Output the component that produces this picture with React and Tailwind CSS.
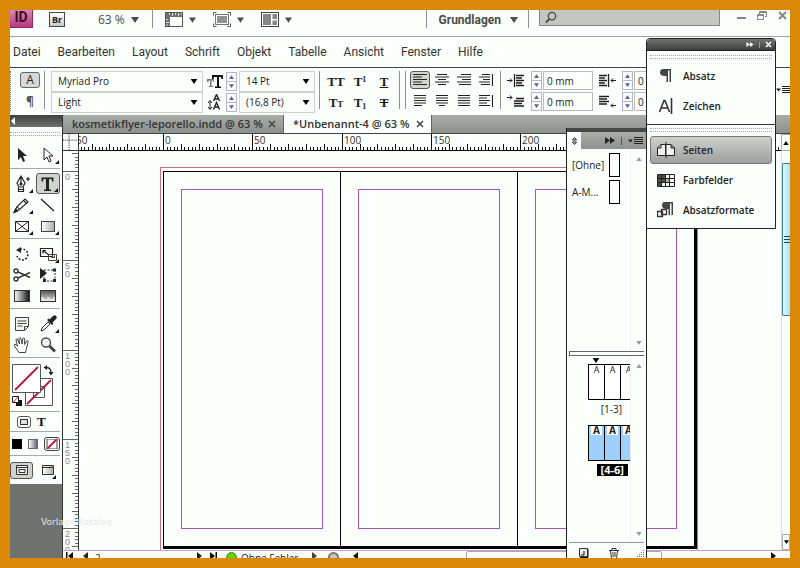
const MENUS = ["Datei", "Bearbeiten", "Layout", "Schrift", "Objekt", "Tabelle", "Ansicht", "Fenster", "Hilfe"];

// Screen pixels per ruler unit at 63 % zoom
const UNIT = 1.787;

/* ── Small shared shapes ── */
function Caret({ className = "w-2 h-[6px]" }) {
  return (
    <svg viewBox="0 0 8 6" className={`shrink-0 fill-current ${className}`} aria-hidden="true">
      <path d="M0 0h8L4 6z" />
    </svg>
  );
}

function Divider() {
  return <div className="w-px self-stretch bg-[#8f938f] shrink-0" />;
}

function Grip() {
  return <div className="h-[4px] shrink-0 border-y border-dotted border-[#a4a8a4]" />;
}

function DoubleArrow() {
  return (
    <svg width="10" height="7" viewBox="0 0 10 7" className="fill-current" aria-hidden="true">
      <path d="M0 0l5 3.5L0 7zM5 0l5 3.5L5 7z" />
    </svg>
  );
}

function MenuLines() {
  return (
    <svg width="15" height="8" viewBox="0 0 15 8" className="shrink-0" aria-hidden="true">
      <path d="M0 2.500h5L2.500 5.500z" fill="#222" />
      <path d="M6 .5h9M6 2.500h9M6 4.500h9M6 6.500h9" stroke="#222" />
    </svg>
  );
}

/* ── Application bar ── */
function AppBar() {
  return (
    <header className="flex items-start h-[27px] shrink-0 border-b border-[#9da19d] text-[#4a4d4a]">
      <div className="w-[23px] h-[18px] bg-linear-to-b from-[#d58ab4] to-[#b8357c] border-r border-b border-[#8f2b62] text-[#3a0a26] text-[14px] leading-[14px] font-bold text-center font-['Roboto',sans-serif]">
        ID
      </div>
      <button className="ml-4 mt-[2px] w-[16px] h-[15px] border border-[#444] bg-linear-to-b from-white to-[#c9cdc9] text-[9px] leading-[13px] font-bold text-[#222]">
        Br
      </button>
      <button className="ml-[33px] flex items-center gap-[6px] h-5 text-[12px]">
        63 % <Caret />
      </button>
      <div className="flex ml-[13px] h-[18px]">
        <Divider />
      </div>
      <button className="ml-3 flex items-center gap-[6px] h-[19px]" aria-label="Anzeigeoptionen">
        <svg width="18" height="15" viewBox="0 0 18 15">
          <rect x=".5" y=".5" width="17" height="14" fill="#fff" stroke="#555" />
          <path d="M1 1h16v4H5v9H1z" fill="#6d706d" />
          <path d="M4.5 1v2M7.500 1v3M10.500 1v2M13.500 1v3M16 1v2M1 7.500h2M1 10.500h3M1 13h2" stroke="#ddd" />
        </svg>
        <Caret className="w-[7px] h-[6px]" />
      </button>
      <button className="ml-[17px] flex items-center gap-[6px] h-[19px]" aria-label="Bildschirmmodus">
        <svg width="18" height="15" viewBox="0 0 18 15" fill="none" stroke="#555">
          <path d="M.5 3.500v-3h3M14.500.5h3v3M17.500 11.500v3h-3M3.500 14.500h-3v-3" />
          <rect x="2.500" y="2.500" width="13" height="10" stroke="#777" />
          <rect x="4" y="4" width="10" height="7" fill="#909390" stroke="none" />
        </svg>
        <Caret className="w-[7px] h-[6px]" />
      </button>
      <button className="ml-[17px] flex items-center gap-[6px] h-[19px]" aria-label="Dokumente anordnen">
        <svg width="18" height="15" viewBox="0 0 18 15">
          <rect x=".5" y=".5" width="17" height="14" fill="#fff" stroke="#444" />
          <path d="M2 2h8v11H2zM11.500 2H16v5h-4.500zM11.500 8.500H16V13h-4.500z" fill="#858985" />
        </svg>
        <Caret className="w-[7px] h-[6px]" />
      </button>
      <div className="ml-auto flex items-start">
        <div className="flex h-[18px]">
          <Divider />
        </div>
        <button className="ml-3 flex items-center gap-[9px] h-5 text-[12px] font-bold font-['Roboto',sans-serif]">
          Grundlagen <Caret />
        </button>
        <div className="flex ml-[10px] h-[18px]">
          <Divider />
        </div>
        <label className="ml-[10px] flex items-center w-[181px] h-4 pl-[5px] bg-[#c3c6c3] border border-t-0 border-[#858985]">
          <svg width="13" height="13" viewBox="0 0 13 13" fill="none" stroke="#444" aria-hidden="true">
            <circle cx="7.500" cy="5" r="4" strokeWidth="1.300" />
            <path d="M4.800 8 1 12" strokeWidth="2" />
          </svg>
          <input aria-label="Suchen" className="w-full min-w-0 bg-transparent outline-none text-[11px]" />
        </label>
        <div className="flex items-start gap-[11px] ml-[17px] pr-[3px] text-[#858885]">
          <button aria-label="Minimieren">
            <svg width="9" height="11" viewBox="0 0 9 11">
              <path d="M0 8h9" stroke="currentColor" strokeWidth="2" />
            </svg>
          </button>
          <button aria-label="Wiederherstellen">
            <svg width="10" height="11" viewBox="0 0 10 11" fill="none" stroke="currentColor">
              <path d="M2.500 4V1.500h7v5H8M2.500 2.500h7M.5 4.500h6v5h-6zM.5 5.500h6" />
            </svg>
          </button>
          <button aria-label="Schließen">
            <svg width="9" height="11" viewBox="0 0 9 11">
              <path d="M1 2l7 7M8 2 1 9" stroke="currentColor" strokeWidth="2" />
            </svg>
          </button>
        </div>
      </div>
    </header>
  );
}

/* ── Control bar ── */
function Dropdown({ label, value, className }) {
  return (
    <label className={`relative flex items-center h-[21px] border border-[#cdd1cd] ${className}`}>
      <select
        aria-label={label}
        className="appearance-none w-full h-full pl-[6px] bg-transparent text-[10px] text-[#222] outline-none"
      >
        <option>{value}</option>
      </select>
      <Caret className="absolute right-[4px] w-2 h-[5px] text-black pointer-events-none" />
    </label>
  );
}

function Stepper({ label }) {
  return (
    <div className="flex flex-col w-[11px] h-[19px] shrink-0 border border-[#b3b6cc]">
      <button className="flex-1 flex items-center justify-center border-b border-[#b3b6cc]" aria-label={`${label} erhöhen`}>
        <Caret className="w-[5px] h-[4px] rotate-180 text-[#5c6394]" />
      </button>
      <button className="flex-1 flex items-center justify-center" aria-label={`${label} verringern`}>
        <Caret className="w-[5px] h-[4px] text-[#5c6394]" />
      </button>
    </div>
  );
}

function Measure({ label }) {
  return (
    <div className="flex items-center gap-px">
      <Stepper label={label} />
      <input
        aria-label={label}
        defaultValue="0 mm"
        className="w-[50px] h-[19px] px-[3px] border border-[#b9bdb9] bg-transparent text-[10px] text-[#222] outline-none"
      />
    </div>
  );
}

const ALIGNMENTS = [
  { name: "Linksbündig", d: "M0 .5h14M0 3h9M0 5.500h14M0 8h9M0 10.500h14", active: true },
  { name: "Zentriert", d: "M2 .5h10M0 3h14M3 5.500h8M0 8h14M3 10.500h8" },
  { name: "Rechtsbündig", d: "M4 .5h10M0 3h14M5 5.500h9M0 8h14M2 10.500h12" },
  { name: "Am Rücken", d: "M3 .5h8M0 3h11M4 5.500h7M0 8h11M2 10.500h9M13.500 0v12" },
  { name: "Blocksatz links", d: "M1 .5h12M1 3h12M1 5.500h12M1 8h12M1 10.500h8" },
  { name: "Blocksatz zentriert", d: "M1 .5h12M1 3h12M1 5.500h12M1 8h12M4 10.500h6" },
  { name: "Blocksatz", d: "M1 .5h12M1 3h12M1 5.500h12M1 8h12M1 10.500h12" },
  { name: "Vom Rücken weg", d: "M0 .5h11M0 3h8M0 5.500h11M0 8h8M0 10.500h11M13.500 0v12" },
];

function IndentIcon({ d, arrow }) {
  return (
    <svg width="17" height="13" viewBox="0 0 17 13" fill="none" stroke="#1c1c1c" className="shrink-0" aria-hidden="true">
      <path d={d} strokeWidth="1.300" />
      <path d={arrow} />
    </svg>
  );
}

function ControlBar() {
  const glyph = "w-5 h-[21px] font-['Liberation_Serif',serif] font-bold text-[13px] leading-[21px] text-[#1c1c1c]";
  return (
    <div className="flex items-start h-[47px] shrink-0 pt-[3px] text-[#222] overflow-hidden">
      <div className="w-[2px] h-10 border-l border-dotted border-[#777]" />
      <div className="flex flex-col items-center ml-2 w-5 gap-[7px] pt-px">
        <button className="w-5 h-4 rounded-[3px] border border-[#666] bg-[#d5d8d5] text-[12px] leading-[14px]">A</button>
        <button className="text-[12px] leading-[14px] font-bold text-[#555]">¶</button>
      </div>
      <div className="flex h-[38px] ml-1">
        <Divider />
      </div>

      <div className="flex flex-col ml-[6px]">
        <Dropdown label="Schriftart" value="Myriad Pro" className="w-[152px]" />
        <Dropdown label="Schriftschnitt" value="Light" className="w-[152px]" />
      </div>

      <div className="flex flex-col ml-1 gap-px">
        <div className="flex items-center gap-[3px] h-5">
          <svg width="16" height="16" viewBox="0 0 16 16" aria-hidden="true">
            <path d="M0 6h7v3H6V7.500H4.500V13H6v1H2v-1h1V7.500H1.500V9H0z" fill="#777" />
            <path d="M5 2h11v4h-1.500L14 4h-2v9.500h2V15H8v-1.500h2V4H7l-.5 2H5z" fill="#111" />
          </svg>
          <Stepper label="Schriftgrad" />
        </div>
        <div className="flex items-center gap-[3px] h-5">
          <svg width="16" height="16" viewBox="0 0 16 16" fill="none" stroke="#222" aria-hidden="true">
            <path d="M6.500 7 9.500.5 12.500 7M7.500 5h4M6.500 15.500l3-7 3 7M7.500 13h4" strokeWidth="1.400" />
            <path d="M3 7v8M1 9l2-2.500L5 9M1 13l2 2.500L5 13" />
          </svg>
          <Stepper label="Zeilenabstand" />
        </div>
      </div>
      <div className="flex flex-col ml-[2px]">
        <Dropdown label="Schriftgrad" value="14 Pt" className="w-[76px]" />
        <Dropdown label="Zeilenabstand" value="(16,8 Pt)" className="w-[76px]" />
      </div>
      <div className="flex h-[38px] ml-1 mr-1">
        <Divider />
      </div>

      <div className="grid grid-cols-[24px_24px_24px] justify-items-center">
        <button className={glyph}>TT</button>
        <button className={glyph}>T<sup className="text-[8px]">1</sup></button>
        <button className={`${glyph} underline`}>T</button>
        <button className={glyph}>T<span className="text-[9px]">T</span></button>
        <button className={glyph}>T<sub className="text-[8px]">1</sub></button>
        <button className={`${glyph} line-through`}>T</button>
      </div>
      <div className="flex h-[38px] ml-[3px] gap-[5px]">
        <Divider />
        <Divider />
      </div>

      <div className="grid grid-cols-4 gap-x-[2px] gap-y-[3px] ml-1">
        {ALIGNMENTS.map((a) => (
          <button
            key={a.name}
            aria-label={a.name}
            className={`w-5 h-[18px] flex items-center justify-center rounded-[3px] ${
              a.active ? "border border-[#555] bg-[#d3d6d3]" : ""
            }`}
          >
            <svg width="14" height="12" viewBox="0 0 14 12" className="shrink-0">
              <path d={a.d} stroke="#222" strokeWidth="1.200" />
            </svg>
          </button>
        ))}
      </div>
      <div className="flex h-[38px] ml-1">
        <Divider />
      </div>

      <div className="flex flex-col ml-[6px] gap-[2px]">
        <div className="flex items-center gap-[7px]">
          <IndentIcon d="M7.500 0v13M9 1.500h8M9 4h6M9 6.500h8M9 9h6M9 11.500h8" arrow="M0 6.500h5M3 4.500l2 2-2 2" />
          <Measure label="Einzug links" />
        </div>
        <div className="flex items-center gap-[7px]">
          <IndentIcon d="M9 3.500h8M7 6h10M7 8.500h8M7 11h10" arrow="M0 2.500h5M3 .5l2 2-2 2" />
          <Measure label="Einzug erste Zeile links" />
        </div>
      </div>
      <div className="flex flex-col ml-[6px] gap-[2px]">
        <div className="flex items-center gap-[6px]">
          <IndentIcon d="M0 1.500h8M0 4h6M0 6.500h8M0 9h6M0 11.500h8M9.500 0v13" arrow="M17 6.500h-5M14 4.500l-2 2 2 2" />
          <Measure label="Einzug rechts" />
        </div>
        <div className="flex items-center gap-[6px]">
          <IndentIcon d="M0 1.500h10M0 4h8M0 6.500h10M0 9h8" arrow="M17 10.500h-5M14 8.500l-2 2 2 2" />
          <Measure label="Einzug letzte Zeile rechts" />
        </div>
      </div>
      <button className="ml-auto mt-[15px] -mr-px" aria-label="Bedienfeldmenü">
        <MenuLines />
      </button>
    </div>
  );
}

/* ── Toolbox ── */
const TOOL_GROUPS = [
  {
    pad: "pt-[8px] pb-[3px]",
    tools: [
      { name: "Auswahl", art: <path d="M5 2v12l3-3 2 5 2-1-2-5h4z" fill="#222" /> },
      {
        name: "Direktauswahl",
        more: true,
        art: <path d="M5 2v12l3-3 2 5 2-1-2-5h4z" fill="#fff" stroke="#222" />,
      },
    ],
  },
  {
    pad: "pt-[4px] pb-[2px]",
    tools: [
      {
        name: "Zeichenstift",
        more: true,
        art: (
          <g fill="none" stroke="#222" strokeWidth="1.200">
            <path d="M8 1 4 8l2 4h4l2-4zM8 1v7M5.500 12.500v4h5v-4M5.500 14.500h5" />
            <circle cx="8" cy="9" r="1" fill="#222" />
            <path d="M13 4h4M15 2v4" />
          </g>
        ),
      },
      {
        name: "Text",
        more: true,
        active: true,
        art: <path d="M2.500 2.500h12v4H13L12.500 4H10v10.500h2V16H5v-1.500h2V4H4.500L4 6.500H2.500z" fill="#222" />,
      },
      {
        name: "Buntstift",
        more: true,
        art: (
          <g fill="#fff" stroke="#222" strokeWidth="1.100">
            <path d="M1.500 16 4 10.500 12 3l3 3-8.500 7.500z" />
            <path d="M4 10.500 6.500 13.500M10.500 4.500l3 3" />
            <path d="M1 16.500 2.500 13 4.500 15z" fill="#222" />
          </g>
        ),
      },
      { name: "Linie", art: <path d="M2 3l13 12" stroke="#222" strokeWidth="1.300" /> },
      {
        name: "Rechteckrahmen",
        more: true,
        art: <path d="M2.500 4.500h13v10h-13zM2.500 4.500l13 10M15.500 4.500l-13 10" fill="#fff" stroke="#222" />,
      },
      {
        name: "Rechteck",
        more: true,
        art: <rect x="2.500" y="4.500" width="13" height="10" fill="url(#light)" stroke="#444" />,
      },
    ],
  },
  {
    pad: "pt-[4px] pb-[2px]",
    tools: [
      {
        name: "Drehen",
        art: (
          <g>
            <path d="M7 4.500A5.500 5.500 0 1 1 4 11" fill="none" stroke="#222" strokeWidth="1.500" strokeDasharray="2 1.500" />
            <path d="M3 5l5-3v6z" fill="#222" />
          </g>
        ),
      },
      {
        name: "Skalieren",
        more: true,
        art: (
          <g fill="none" stroke="#222">
            <path d="M1.500 3.500h12v8h-12zM4 5.500l6 4.500M4 8.500v-3h3" strokeWidth="1.200" />
            <path d="M9.500 9.500h8v6h-8zM12.500 12.500h3v-2" stroke="#444" />
          </g>
        ),
      },
      {
        name: "Schere",
        art: (
          <g fill="none" stroke="#333" strokeWidth="1.400">
            <circle cx="3" cy="5" r="2" />
            <circle cx="3" cy="13" r="2" />
            <path d="M5 6l12 5.500M5 12l12-5.500" />
          </g>
        ),
      },
      {
        name: "Frei transformieren",
        art: (
          <g>
            <rect x="5" y="4" width="11" height="11" fill="none" stroke="#222" strokeDasharray="2 1.500" />
            <path d="M1 2v11l7-6z" fill="#222" />
            <path d="M4 13h3v3H4zM14 2.500h3v3h-3zM14 13h3v3h-3z" fill="#222" />
          </g>
        ),
      },
      {
        name: "Verlaufsfarbfeld",
        art: <rect x="1.500" y="3.500" width="15" height="11" fill="url(#dark)" stroke="#333" />,
      },
      {
        name: "Weiche Verlaufskante",
        art: (
          <g>
            <rect x="1.500" y="3.500" width="15" height="11" fill="url(#down)" stroke="#333" />
            <path d="M2 10h3v2h3v-2h3v2h3v-2h2v4H2z" fill="#fff" opacity=".5" />
          </g>
        ),
      },
    ],
  },
  {
    pad: "pt-[4px] pb-[2px]",
    tools: [
      {
        name: "Notiz",
        art: (
          <g stroke="#444">
            <path d="M2.500 2.500h13v9l-4 4h-9z" fill="#f4f6f4" />
            <path d="M4.500 6h9M4.500 8.500h9M4.500 11h5M11.500 15.500v-4h4" fill="none" />
          </g>
        ),
      },
      {
        name: "Pipette",
        more: true,
        art: (
          <g>
            <path d="M2 16l1-3 6-6 2 2-6 6z" fill="#fff" stroke="#333" />
            <path d="M8 5l5 5 1.500-1.500-1-1L17 4a2 2 0 0 0-3-3l-3.500 3.500-1-1z" fill="#222" />
          </g>
        ),
      },
      {
        name: "Hand",
        art: (
          <path
            d="M6 16.500 1.500 10q-1-2 .5-2l2.500 2L3 4q0-1.500 1.500-1L6.500 8 6 2.500q.8-2 2 0L9 8l.8-5.500q1.200-1.500 2 .2L11.500 8.500 13.500 5q1.500-1 1.700.6L13.500 12l-1 4.500z"
            fill="#fff"
            stroke="#444"
          />
        ),
      },
      {
        name: "Zoom",
        art: (
          <g>
            <circle cx="7" cy="6.500" r="4.500" fill="#eef1ee" stroke="#444" strokeWidth="1.300" />
            <path d="M10.500 10l5.500 5.500" stroke="#444" strokeWidth="3" />
          </g>
        ),
      },
    ],
  },
];

function ToolButton({ name, art, more, active }) {
  return (
    <button
      aria-label={name}
      className={`relative h-[21px] flex items-center justify-center rounded-[3px] ${
        active ? "border border-[#555] bg-[#d0d3d0]" : ""
      }`}
    >
      <svg width="18" height="18" viewBox="0 0 18 18" className="shrink-0">
        {art}
      </svg>
      {more && (
        <svg width="4" height="4" viewBox="0 0 4 4" className="absolute right-px bottom-px">
          <path d="M4 0v4H0z" fill="#111" />
        </svg>
      )}
    </button>
  );
}

function Toolbox() {
  return (
    <aside className="flex flex-col w-[53px] shrink-0 border-r border-[#333] bg-[#6e726e]">
      <svg width="0" height="0" className="absolute" aria-hidden="true">
        <linearGradient id="light"><stop stopColor="#fff" /><stop offset="1" stopColor="#aaa" /></linearGradient>
        <linearGradient id="dark"><stop stopColor="#fff" /><stop offset="1" stopColor="#111" /></linearGradient>
        <linearGradient id="down" x2="0" y2="1"><stop stopColor="#555" /><stop offset="1" stopColor="#ddd" /></linearGradient>
      </svg>
      <button className="h-[12px] pl-[1px] bg-linear-to-b from-[#3d403d] to-[#6f736f] text-white" aria-label="Werkzeuge reduzieren">
        <svg width="4" height="8" viewBox="0 0 4 8"><path d="M4 0v8L0 4z" fill="currentColor" /></svg>
      </button>
      <div className="flex flex-col bg-[#fbfffb] pr-[2px] pt-[5px]">
        <Grip />
        {TOOL_GROUPS.map((group) => (
          <div key={group.tools[0].name} className={`grid grid-cols-[24px_24px] justify-between border-b border-[#a5a9a5] ${group.pad}`}>
            {group.tools.map((tool) => (
              <ToolButton key={tool.name} {...tool} />
            ))}
          </div>
        ))}

        {/* Fill and stroke */}
        <button className="flex h-[54px] pt-[6px] pl-[2px] border-b border-[#a5a9a5]" aria-label="Fläche und Kontur">
          <svg width="43" height="43" viewBox="0 0 43 43" fill="none">
            <path d="M13.500 14.500h27v27h-27z" fill="#fff" stroke="#555" />
            <path d="M21.500 22.500h11v11h-11z" stroke="#555" />
            <path d="M15 40 39 16" stroke="#b01f45" strokeWidth="2" />
            <path d="M.5.500h28v28H.5z" fill="#fff" stroke="#555" />
            <path d="M3 26 26 3" stroke="#b01f45" strokeWidth="2" />
            <path d="M34 3.500q5 0 5 5" stroke="#222" strokeWidth="1.300" />
            <path d="M35 1v5l-3.500-2.500zM36.500 8h5L39 11.500z" fill="#222" />
            <path d="M4 36h6v6H4z" fill="#111" />
            <path d="M.5 32.500h6v6h-6z" fill="#fff" stroke="#222" />
            <path d="M1.500 38 6 33" stroke="#c22" />
          </svg>
        </button>
        <div className="flex items-center gap-[6px] h-5 pl-[7px] border-b border-[#a5a9a5]">
          <button className="w-[14px] h-3 rounded-[3px] border border-[#555] p-[2px]" aria-label="Formatierung wirkt sich auf Rahmen aus">
            <span className="block w-full h-full border border-[#333] bg-[#ddd]" />
          </button>
          <button className="font-['Liberation_Serif',serif] font-bold text-[13px] leading-none text-[#111]">T</button>
        </div>
        <div className="flex items-center gap-[6px] h-6 pl-[2px] border-b border-[#a5a9a5]">
          <button className="w-[10px] h-[10px] bg-black" aria-label="Farbe anwenden" />
          <button className="w-[10px] h-[10px] border border-[#666] bg-linear-to-r from-white to-[#667]" aria-label="Verlauf anwenden" />
          <button className="w-4 h-[14px] rounded-[3px] border border-[#444] p-px" aria-label="Keine anwenden">
            <svg viewBox="0 0 10 10" className="w-full h-full"><path d="M0 0h10v10H0z" fill="#fff" stroke="#444" /><path d="M0 10 10 0" stroke="#c8203c" strokeWidth="2" /></svg>
          </button>
        </div>
        <div className="flex items-center h-7 gap-[6px]">
          <button className="flex items-center justify-center w-[23px] h-[17px] rounded-[3px] border border-[#555] bg-[#cfd2cf]" aria-label="Normal">
            <svg width="12" height="10" viewBox="0 0 12 10"><path d="M.5.500h11v9H.5zM.5 2.500h11M3 4.500h6v3H3z" fill="#eee" stroke="#333" /></svg>
          </button>
          <button className="relative flex items-center justify-center w-[17px] h-[17px]" aria-label="Vorschau">
            <svg width="12" height="10" viewBox="0 0 12 10"><path d="M.5.500h11v9H.5zM.5 2.500h11" fill="url(#light)" stroke="#333" /></svg>
            <svg width="4" height="4" viewBox="0 0 4 4" className="absolute right-0 bottom-0"><path d="M4 0v4H0z" fill="#111" /></svg>
          </button>
        </div>
      </div>
    </aside>
  );
}

/* ── Rulers ── */
// One tick every 2 units, a longer one every 10 and a full one every 50
function ticks(origin, length) {
  const list = [];
  for (let u = -50; u * UNIT + origin < length; u += 2) {
    const at = Math.round(origin + u * UNIT);
    if (at > 0) list.push({ u, at, size: u % 50 === 0 ? 16 : u % 10 === 0 ? 6 : 3 });
  }
  return list;
}

function TopRuler() {
  return (
    <div className="flex-1 min-w-0 h-[17px] overflow-hidden border-b border-black">
      <svg width="1600" height="16" className="block">
        {ticks(84, 1600).map(({ u, at, size }) => (
          <path key={u} d={`M${at + 0.5} 16v-${size}`} stroke="#111" />
        ))}
        {[-50, 0, 50, 100, 150, 200].map((u) => (
          <text key={u} x={Math.round(86 + u * UNIT)} y="10" fontSize="10" fill="#333">
            {Math.abs(u)}
          </text>
        ))}
      </svg>
    </div>
  );
}

function SideRuler() {
  return (
    <div className="w-[16px] shrink-0 overflow-hidden border-r border-[#333]">
      <svg width="15" height="1600" className="block font-['Liberation_Sans',sans-serif]">
        {ticks(20, 1600).map(({ u, at, size }) => (
          <path key={u} d={`M15 ${at + 0.5}h-${size}`} stroke="#666" />
        ))}
        {[0, 50, 100, 150, 200].map((u) =>
          String(u).split("").map((digit, i) => (
            <text key={`${u}-${i}`} x="2" y={Math.round(29 + u * UNIT + i * 8)} fontSize="9" fill="#888">
              {digit}
            </text>
          ))
        )}
      </svg>
    </div>
  );
}

/* ── Document window ── */
function DocumentTabs() {
  return (
    <div className="flex h-[19px] shrink-0 bg-linear-to-b from-[#a9ada9] to-[#8d918d] border-b border-[#444] text-[11px] font-semibold text-[#333]">
      <div className="flex items-center justify-between w-[221px] pl-[9px] pr-[7px] border-r border-[#666]">
        <a href="#leporello">kosmetikflyer-leporello.indd @ 63 %</a>
        <CloseTab />
      </div>
      <div className="flex items-center justify-between w-[148px] pl-[9px] pr-[7px] bg-[#fbfffb] border-r border-[#666]">
        <a href="#unbenannt">*Unbenannt-4 @ 63 %</a>
        <CloseTab />
      </div>
    </div>
  );
}

function CloseTab() {
  return (
    <button aria-label="Tab schließen">
      <svg width="8" height="8" viewBox="0 0 8 8"><path d="M1 1l6 6M7 1 1 7" stroke="#444" strokeWidth="1.500" /></svg>
    </button>
  );
}

function Spread() {
  return (
    <div className="shrink-0 flex border border-b-0 border-[#d4707c] pt-[3px] pl-[2px] h-[384px]">
      <div className="flex h-[378px] border-t border-l border-black border-r-[3px] border-b-[3px]">
        {[0, 1, 2].map((page) => (
          <div key={page} className={`p-[17px] ${page === 2 ? "w-[176px]" : "w-[177px] border-r border-black"}`}>
            <div className="h-full border border-[#a558b4]" />
          </div>
        ))}
      </div>
    </div>
  );
}

function VerticalScroll() {
  return (
    <div className="flex flex-col w-[9px] shrink-0 border-l border-[#ddd] overflow-hidden">
      <div className="h-3" />
      <div className="flex flex-col items-end justify-center gap-[2px] h-[153px] rounded-l-[2px] border border-r-0 border-[#3c7f9a] bg-linear-to-r from-[#dffaff] to-[#9fe4f6]">
        <span className="w-[6px] h-px bg-[#245]" />
        <span className="w-[6px] h-px bg-[#245]" />
        <span className="w-[6px] h-px bg-[#245]" />
      </div>
      <button className="mt-auto flex items-center justify-center h-4 border border-[#aaa]" aria-label="Nach unten">
        <Caret className="w-[5px] h-[4px]" />
      </button>
    </div>
  );
}

function StatusBar() {
  return (
    <footer className="flex items-start h-2 shrink-0 pl-[3px] overflow-hidden border-t border-[#c9a0cc] text-[10px] leading-[14px] text-[#222]">
      <button aria-label="Erste Seite"><svg width="7" height="9" viewBox="0 0 7 9"><path d="M0 1h1.500v8H0zM7 1v8L2 5z" fill="#111" /></svg></button>
      <button className="ml-[10px]" aria-label="Vorherige Seite"><svg width="5" height="9" viewBox="0 0 5 9"><path d="M5 1v8L0 5z" fill="#222" /></svg></button>
      <span className="ml-[7px] w-[102px]">2</span>
      <button aria-label="Nächste Seite"><svg width="5" height="9" viewBox="0 0 5 9"><path d="M0 1v8l5-4z" fill="#222" /></svg></button>
      <button className="ml-[8px]" aria-label="Letzte Seite"><svg width="7" height="9" viewBox="0 0 7 9"><path d="M5.500 1H7v8H5.500zM0 1v8l5-4z" fill="#111" /></svg></button>
      <span className="ml-[9px] mt-px w-[11px] h-[11px] shrink-0 rounded-full bg-[#5fd50a] border border-[#4a8a1a]" />
      <span className="ml-1 w-[71px]">Ohne Fehler</span>
      <button aria-label="Preflight-Menü"><svg width="5" height="9" viewBox="0 0 5 9"><path d="M0 1v8l5-4z" fill="#444" /></svg></button>
      <span className="ml-[11px] mt-px w-[11px] h-[11px] shrink-0 rounded-full bg-[#c8cbc8] border-2 border-[#777]" />
      <button className="ml-[14px]" aria-label="Nach links"><svg width="5" height="9" viewBox="0 0 5 9"><path d="M5 1v8L0 5z" fill="#111" /></svg></button>
      <div className="ml-[108px] w-[196px] h-4 rounded-[2px] border border-[#aaa] shrink-0" />
      <button className="ml-auto mr-[14px]" aria-label="Nach rechts"><svg width="5" height="9" viewBox="0 0 5 9"><path d="M0 1v8l5-4z" fill="#111" /></svg></button>
    </footer>
  );
}

function DocumentWindow() {
  return (
    <main className="flex flex-col flex-1 min-w-0">
      <DocumentTabs />
      <div className="flex shrink-0">
        <svg width="16" height="17" viewBox="0 0 16 17" className="shrink-0 border-r border-b border-[#333]">
          <path d="M6.500 0v17M0 6.500h16" stroke="#222" strokeDasharray="1 1" />
        </svg>
        <TopRuler />
        <button className="flex items-center justify-center w-[9px] shrink-0 border border-r-0 border-[#aaa]" aria-label="Nach oben">
          <Caret className="w-[6px] h-[4px] rotate-180" />
        </button>
      </div>
      <div className="flex flex-1 min-h-0">
        <SideRuler />
        <div className="flex flex-1 min-w-0 items-start overflow-hidden pt-4 pl-[81px]">
          <Spread />
        </div>
        <VerticalScroll />
      </div>
      <StatusBar />
    </main>
  );
}

/* ── Pages panel ── */
function ScrollArrows() {
  return (
    <div className="flex flex-col justify-between w-4 shrink-0 pt-[8px] pb-[6px] items-center border-l border-[#eef0ee] text-[#999d99]">
      <button aria-label="Nach oben"><Caret className="block w-[6px] h-[4px] rotate-180" /></button>
      <button aria-label="Nach unten"><Caret className="block w-[6px] h-[4px]" /></button>
    </div>
  );
}

function PageRow({ label, selected }) {
  return (
    <div className="flex flex-col items-end">
      <div className="flex w-[42px] overflow-hidden">
        {[0, 1, 2].map((page) => (
          <button
            key={page}
            className={`flex justify-center w-[17px] -mr-px h-9 shrink-0 border border-black text-[#222] ${
              selected ? "bg-[#9fd0fb] font-bold text-[10px]" : "bg-white text-[9px] leading-[10px]"
            }`}
          >
            {selected ? <span className="h-[9px] px-[2px] leading-[9px] bg-white">A</span> : "A"}
          </button>
        ))}
      </div>
      <span
        className={`mt-[3px] h-3 leading-3 ${
          selected ? "mr-[2px] px-1 text-[11px] bg-black text-white font-bold" : "mr-[8px] text-[10px] text-[#222]"
        }`}
      >
        {label}
      </span>
    </div>
  );
}

function PagesPanel() {
  return (
    <section className="absolute top-[118px] bottom-0 right-[143px] w-[81px] flex flex-col border-x border-[#222] bg-[#fbfffb] text-[10px] text-[#222]">
      <div className="h-1 shrink-0 bg-[#454845]" />
      <div className="flex h-[17px] shrink-0 bg-linear-to-b from-[#a9ada9] to-[#8f938f]">
        <button className="flex items-center justify-center w-[14px] bg-[#fbfffb]" aria-label="Ansicht wechseln">
          <svg width="5" height="8" viewBox="0 0 5 8"><path d="M.5 3 2.500.500 4.500 3zM.5 5 2.500 7.500 4.500 5z" fill="none" stroke="#222" /></svg>
        </button>
        <div className="flex items-center gap-[6px] ml-auto pr-[3px]">
          <DoubleArrow />
          <div className="w-px h-2 bg-[#555]" />
          <MenuLines />
        </div>
      </div>

      <div className="flex h-[202px] shrink-0">
        <div className="flex flex-col flex-1 min-w-0 gap-[3px] pt-1 pl-[5px] pr-[10px]">
          {["[Ohne]", "A-M..."].map((master) => (
            <div key={master} className="flex items-center justify-between">
              <span>{master}</span>
              <button className="w-[11px] h-6 border border-black bg-white" aria-label={`Musterseite ${master}`} />
            </div>
          ))}
        </div>
        <ScrollArrows />
      </div>

      <div className="h-[5px] ml-[2px] mr-[2px] shrink-0 border border-r-0 border-[#666]" />

      <div className="flex flex-1 min-h-0">
        <div className="flex flex-col flex-1 min-w-0 items-end pt-[2px]">
          <Caret className="w-[10px] h-[5px] mr-[29px] mb-px text-black" />
          <div className="flex flex-col gap-[10px]">
            <PageRow label="[1-3]" />
            <PageRow label="[4-6]" selected />
          </div>
        </div>
        <ScrollArrows />
      </div>

      <div className="flex items-start h-4 shrink-0 ml-[2px] mr-[2px] pt-[5px] pl-[10px] border-t border-[#999]">
        <button aria-label="Neue Seite">
          <svg width="10" height="10" viewBox="0 0 10 10"><path d="M.5.500h8v8h-8z" fill="#eee" stroke="#333" /><path d="M2 7h3V3M9 1v8.500H1" fill="none" stroke="#111" /></svg>
        </button>
        <button className="ml-5" aria-label="Seite löschen">
          <svg width="10" height="11" viewBox="0 0 10 11" fill="none" stroke="#333"><path d="M0 2.500h10M3 2V.5h4V2M1.500 3l1 7.500h5l1-7.500M4 4v5M6 4v5" /></svg>
        </button>
        <svg width="8" height="8" viewBox="0 0 8 8" className="ml-auto mt-px" aria-hidden="true">
          <path d="M1 7.500h7M3 5.500h5M5 3.500h3M7 1.500h1" stroke="#777" strokeDasharray="1 1" />
        </svg>
      </div>
    </section>
  );
}

/* ── Collapsed panel dock ── */
function DockButton({ label, icon, active }) {
  return (
    <button
      className={`flex items-center gap-2 h-7 w-full pl-[7px] pr-[6px] rounded-[3px] text-[10px] font-semibold text-[#222] ${
        active ? "border border-[#777] bg-linear-to-b from-[#cdd0cd] to-[#9da19d]" : "border border-transparent"
      }`}
    >
      <svg width="18" height="16" viewBox="0 0 18 16" className="shrink-0 -ml-px">{icon}</svg>
      {label}
    </button>
  );
}

const PILCROW = <path d="M7 1h7v13h-1.500V2.500H11V14H9.500V8Q3 8.500 3 4.500T7 1z" fill="#444" />;

function PanelDock() {
  return (
    <section className="absolute top-7 right-[14px] w-[130px] border border-[#222] rounded-t-[4px] overflow-hidden bg-[#fbfffb]">
      <div className="flex items-center justify-end gap-[5px] h-[12px] pr-[3px] bg-linear-to-b from-[#6f736f] to-[#3d403d] border-b border-[#222] text-white">
        <svg width="8" height="5" viewBox="0 0 10 7" className="fill-current"><path d="M0 0l5 3.500L0 7zM5 0l5 3.500L5 7z" /></svg>
        <div className="w-px h-[6px] bg-[#999]" />
        <button aria-label="Schließen"><svg width="7" height="7" viewBox="0 0 7 7" className="block"><path d="M1 1l5 5M6 1 1 6" stroke="currentColor" strokeWidth="1.500" /></svg></button>
      </div>
      <div className="flex flex-col px-[3px] pt-[4px] pb-[4px] gap-[2px] border-b border-[#333]">
        <div className="pb-px"><Grip /></div>
        <DockButton label="Absatz" icon={PILCROW} />
        <DockButton
          label="Zeichen"
          icon={<path d="M2.500 14 7 2.500h1L12.500 14M4.500 10h6M14.500 0v16" fill="none" stroke="#333" strokeWidth="1.600" />}
        />
      </div>
      <div className="flex flex-col px-[3px] pt-[3px] pb-[4px] gap-[2px]">
        <div className="pb-[2px]"><Grip /></div>
        <DockButton
          label="Seiten"
          active
          icon={
            <g fill="#eef1ee" stroke="#222">
              <path d="M4 2.500h4.500v11h-8V6zM4 2.500V6H.5M10 2.500h4L17.500 6v7.500h-9v-11zM14 2.500V6h3.500" />
              <path d="M9 0v16" />
            </g>
          }
        />
        <DockButton
          label="Farbfelder"
          icon={
            <g>
              <path d="M.5 2.500h17v12H.5z" fill="#f5f7f5" />
              <path d="M1 3h8v4H1zM1 7h4v7H1zM5 7h4v4H5z" fill="#4a4d4a" />
              <path d="M9 7h4v4H9z" fill="#aaa" />
              <path d="M.5 2.500h17v12H.5zM.5 6.500h17M.5 10.500h17M4.500 2.500v12M8.500 2.500v12M12.500 2.500v12" fill="none" stroke="#222" />
            </g>
          }
        />
        <DockButton
          label="Absatzformate"
          icon={
            <g>
              <g transform="translate(2 -1)">{PILCROW}</g>
              <path d="M4.500 7.500h5v5h-5zM.5 9.500h5v5h-5z" fill="#fff" stroke="#333" strokeWidth="1.300" />
            </g>
          }
        />
      </div>
    </section>
  );
}

export default function App() {
  return (
    <div className="h-screen w-full p-[10px] bg-[#dc8808] font-['Open_Sans','Noto_Sans',sans-serif]">
      <div className="relative flex flex-col h-full overflow-hidden bg-[#fbfffb]">
        <AppBar />
        <nav className="flex items-center gap-[17px] h-[31px] shrink-0 pl-[3px] border-b border-[#444] text-[12px] text-[#333] font-['Roboto',sans-serif]">
          {MENUS.map((menu) => (
            <a key={menu} href={`#${menu.toLowerCase()}`}>{menu}</a>
          ))}
        </nav>
        <ControlBar />
        <div className="flex flex-1 min-h-0">
          <Toolbox />
          <DocumentWindow />
        </div>
        <PagesPanel />
        <PanelDock />
        <span className="absolute left-[31px] bottom-[28px] text-[9px] leading-4 text-[#e6e9e6] font-['DejaVu_Sans',sans-serif] pointer-events-none">
          Vorlage Katalog
        </span>
      </div>
    </div>
  );
}
